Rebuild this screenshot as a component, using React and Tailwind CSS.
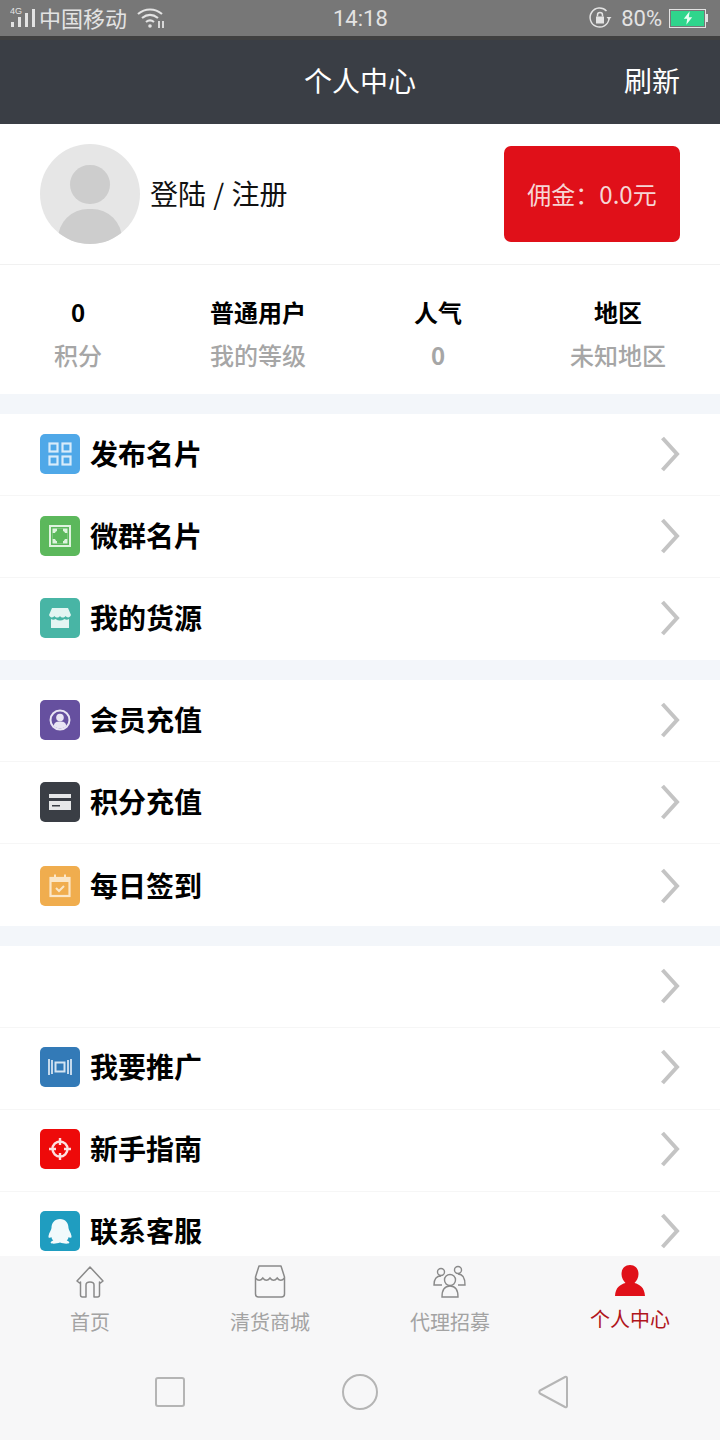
const groups = [
  [
    { key: 'card', label: '发布名片', bg: 'bg-[#4fa8e8]', pad: 'pb-[2px]' },
    { key: 'wechat', label: '微群名片', bg: 'bg-[#5cb85c]', pad: 'pb-[2px]' },
    { key: 'store', label: '我的货源', bg: 'bg-[#48b5a5]', pad: 'pb-[2px]' },
  ],
  [
    { key: 'member', label: '会员充值', bg: 'bg-[#66509f]', pad: 'pb-[2px]' },
    { key: 'credit', label: '积分充值', bg: 'bg-[#3a3e45]', pad: 'pb-[2px]' },
    { key: 'sign', label: '每日签到', bg: 'bg-[#f0ad4e]', pad: 'pt-[2px]' },
  ],
  [
    { key: 'empty', label: '', pad: 'pb-[2px]' },
    { key: 'promo', label: '我要推广', bg: 'bg-[#337ab7]', pad: 'pb-[3px]' },
    { key: 'guide', label: '新手指南', bg: 'bg-[#ee0a0a]', pad: 'pb-1' },
    { key: 'qq', label: '联系客服', bg: 'bg-[#1f9dc0]', pad: 'pb-1' },
  ],
]

const stats = [
  { top: '0', bottom: '积分' },
  { top: '普通用户', bottom: '我的等级' },
  { top: '人气', bottom: '0' },
  { top: '地区', bottom: '未知地区' },
]

function MenuGlyph({ name }) {
  const glyphs = {
    card: (
      <g fill="none" stroke="#d8ecfa" strokeWidth="2.2">
        <rect x="9.5" y="9.5" width="8" height="8" />
        <rect x="22.5" y="9.5" width="8" height="8" />
        <rect x="9.5" y="22.5" width="8" height="8" />
        <rect x="22.5" y="22.5" width="8" height="8" />
      </g>
    ),
    wechat: (
      <g>
        <rect x="10" y="10" width="20" height="20" fill="none" stroke="#dff3df" strokeWidth="2" />
        <rect x="12.5" y="12.5" width="15" height="15" fill="#dff3df" />
        <circle cx="20" cy="20" r="6" fill="#5cb85c" />
        <path d="M17 12.500h6v15h-6zM12.500 17h15v6h-15z" fill="#5cb85c" />
      </g>
    ),
    store: (
      <g fill="#e4f5f2">
        <path d="M12 10h16l3 7c-1 3-4 3-5.500 1-1.500 2-4 2-5.500 0-1.500 2-4 2-5.500 0-1.500 2-4.500 2-5.500-1z" />
        <path d="M11 21c1.500 1 3 1 4.500 0 3 2 6 2 9 0 1.500 1 3 1 4.500 0v9H11z" />
      </g>
    ),
    member: (
      <g>
        <circle cx="20" cy="20" r="9.500" fill="none" stroke="#e9e5f3" strokeWidth="2" />
        <circle cx="20" cy="17.500" r="3.800" fill="#e9e5f3" />
        <path d="M13.500 26c1-4 3.500-4.500 6.500-4.500s5.500.5 6.500 4.500c-3.500 3.300-9.500 3.300-13 0z" fill="#e9e5f3" />
      </g>
    ),
    credit: (
      <g>
        <rect x="9" y="12" width="22" height="16" fill="#e6e7e8" />
        <rect x="9" y="16" width="22" height="3" fill="#3a3e45" />
        <rect x="12" y="23" width="8" height="1.500" fill="#3a3e45" />
      </g>
    ),
    sign: (
      <g>
        <rect x="10.500" y="12" width="19" height="18" fill="none" stroke="#fbe7c8" strokeWidth="2.200" />
        <rect x="10" y="11" width="20" height="5" fill="#fbe7c8" />
        <rect x="14" y="8.500" width="2" height="4" fill="#fbe7c8" />
        <rect x="24" y="8.500" width="2" height="4" fill="#fbe7c8" />
        <path d="M16 22l3 3 5-5" fill="none" stroke="#fbe7c8" strokeWidth="2" />
      </g>
    ),
    promo: (
      <g fill="none" stroke="#d4e4f2">
        <rect x="15.500" y="15.500" width="9" height="9" strokeWidth="2" />
        <path d="M9 12v16M12 13v14M31 12v16M28 13v14" strokeWidth="1.800" />
      </g>
    ),
    guide: (
      <g fill="none" stroke="#fde0e0" strokeWidth="2.400">
        <circle cx="20" cy="20" r="7.500" />
        <path d="M20 9v7M20 24v7M9 20h7M24 20h7" />
      </g>
    ),
    qq: (
      <path
        d="M20 8c-5.500 0-8.500 4-8.500 9 0 2-2.500 4.500-3 8-.2 2 .8 2.500 2.800 1 .4 1.500 1 2.500 2 3.500-2 .7-3 1.500-2.500 2.500.8 1 6 .8 9.200-.5 3.200 1.300 8.400 1.500 9.200.5.500-1-.5-1.800-2.500-2.500 1-1 1.600-2 2-3.500 2 1.500 3 1 2.800-1-.5-3.500-3-6-3-8 0-5-3-9-8.500-9z"
        fill="#f2fafc"
      />
    ),
  }
  return (
    <svg viewBox="0 0 40 40" className="w-10 h-10">
      {glyphs[name]}
    </svg>
  )
}

function MenuRow({ item, last }) {
  return (
    <div className={`flex items-center h-[82px] shrink-0 bg-white pl-10 pr-10 ${item.pad} ${last ? '' : 'border-b border-[#f6f6f6]'}`}>
      {item.bg && (
        <div className={`w-10 h-10 rounded-[5px] mr-[10px] ${item.bg}`}>
          <MenuGlyph name={item.key} />
        </div>
      )}
      <span className="flex-1 text-[28px] font-bold text-black leading-none mb-[2px]">{item.label}</span>
      <svg viewBox="0 0 20 36" className="w-5 h-9" fill="none" stroke="#c4c4c4" strokeWidth="4">
        <path d="M2.500 2L17 18 2.500 34" />
      </svg>
    </div>
  )
}

function TabIcon({ name }) {
  if (name === 'home') {
    return (
      <svg viewBox="0 0 36 36" className="w-9 h-9" fill="none" stroke="#8a8a8a" strokeWidth="1.500">
        <path d="M5 17L18 3l13 14-2.500 2-1-1v13c0 1.500-1 2-2 2h-3.500V21c0-4-8-4-8 0v12H10.500c-1 0-2-.5-2-2V18l-1 1z" strokeLinejoin="round" />
      </svg>
    )
  }
  if (name === 'store') {
    return (
      <svg viewBox="0 0 36 36" className="w-9 h-9" fill="none" stroke="#8a8a8a" strokeWidth="1.500">
        <path d="M7 2h22l3.500 11v17c0 2-1 3-3 3h-23c-2 0-3-1-3-3V13z" strokeLinejoin="round" />
        <path d="M3.500 14c2.500 3 5 3 7.300 0 2.400 3 4.800 3 7.200 0 2.400 3 4.800 3 7.200 0 2.300 3 4.800 3 7.300 0" />
      </svg>
    )
  }
  if (name === 'team') {
    return (
      <svg viewBox="0 0 36 36" className="w-9 h-9" fill="none" stroke="#8a8a8a" strokeWidth="1.400">
        <circle cx="18" cy="16" r="5.500" />
        <circle cx="9" cy="8" r="3.500" />
        <circle cx="26" cy="6" r="3.500" />
        <path d="M10 33c0-8 3-11 8-11s8 3 8 11z" />
        <path d="M10 21H2c0-6 2-9 7-9M26 21h7c0-7-2-11-7-11" />
      </svg>
    )
  }
  return (
    <svg viewBox="0 0 36 36" className="w-9 h-9" fill="#e01019">
      <path d="M18 1c-5.500 0-8.500 4-8.500 9 0 4 2 7 4 9-5 1.500-10 4-10.500 13h30c-.500-9-5.500-11.500-10.500-13 2-2 4-5 4-9 0-5-3-9-8.500-9z" />
    </svg>
  )
}

const tabs = [
  { key: 'home', label: '首页' },
  { key: 'store', label: '清货商城' },
  { key: 'team', label: '代理招募' },
  { key: 'me', label: '个人中心', active: true },
]

export default function App() {
  return (
    <div className="w-[720px] h-[1440px] overflow-hidden flex flex-col bg-white font-['Noto_Sans_CJK_SC','Noto_Sans',sans-serif]">
      {/* Status bar */}
      <div className="h-9 shrink-0 bg-[#777777] text-[#e3e3e3] text-[22px] flex items-center justify-between pl-[10px] pr-3 relative">
        <div className="flex items-center">
          <svg viewBox="0 0 30 24" className="w-[30px] h-6" fill="#e3e3e3">
            <text x="0" y="8" fontSize="9" fontFamily="Liberation Sans, sans-serif">4G</text>
            <rect x="1" y="16" width="3" height="5" />
            <rect x="8" y="11" width="3" height="10" />
            <rect x="15" y="7" width="3" height="14" />
            <rect x="22" y="3" width="3" height="18" />
          </svg>
          <span className="ml-[-1px] leading-none mb-[2px]">中国移动</span>
          <svg viewBox="0 0 30 24" className="w-[30px] h-6 ml-[9px]" fill="none" stroke="#e3e3e3" strokeWidth="2.200">
            <path d="M2 8c7-6 17-6 24 0M6 12c5-4 11-4 16 0M10 16c2.500-2 5.500-2 8 0" />
            <circle cx="14" cy="20" r="1.800" fill="#e3e3e3" stroke="none" />
            <path d="M23 15v7M27 15v7" strokeWidth="1.800" />
          </svg>
        </div>
        <span className="absolute left-[333px] top-[8px] font-['Roboto',sans-serif] text-[22px] leading-none">14:18</span>
        <div className="flex items-center font-['Roboto',sans-serif]">
          <svg viewBox="0 0 24 24" className="w-6 h-6" fill="none" stroke="#e3e3e3" strokeWidth="1.500">
            <path d="M21 13a9.500 9.500 0 1 1-2.500-8" />
            <path d="M23.500 11l-2.500 3-2.500-3z" fill="#e3e3e3" stroke="none" />
            <rect x="8" y="10.500" width="8" height="7" fill="#e3e3e3" stroke="none" />
            <path d="M9.500 10.500V9a2.500 2.500 0 0 1 5 0v1.500" />
          </svg>
          <span className="ml-[9px] leading-none mt-px">80%</span>
          <div className="ml-[7px] w-[37px] h-[19px] border border-[#e3e3e3] p-px flex items-center justify-center">
            <div className="w-[33px] h-[15px] bg-[#2fd58c] flex items-center justify-center">
              <svg viewBox="0 0 12 16" className="w-[10px] h-[14px]" fill="#e8fff4">
                <path d="M8 0L1 9h4l-1 7 7-9H7z" />
              </svg>
            </div>
          </div>
          <div className="w-[2px] h-2 bg-[#e3e3e3]" />
        </div>
      </div>

      {/* Header */}
      <div className="h-[88px] shrink-0 bg-[#3a3e45] flex items-center justify-center relative border-t-4 border-[#404040] pb-1">
        <span className="text-[28px] text-white leading-none">个人中心</span>
        <span className="absolute right-10 text-[28px] text-white leading-none">刷新</span>
      </div>

      {/* Profile */}
      <div className="h-[141px] shrink-0 flex items-center justify-between pl-10 pr-10 pb-px border-b border-[#f1f1f1]">
        <div className="flex items-center">
          <div className="w-[100px] h-[100px] rounded-full bg-[#e6e6e6] overflow-hidden flex flex-col items-center">
            <div className="w-10 h-[39px] rounded-full bg-[#cdcdcd] mt-[21px] shrink-0" />
            <div className="w-[64px] h-[60px] rounded-full bg-[#cdcdcd] mt-[5px] shrink-0" />
          </div>
          <span className="ml-[10px] text-[28px] text-[#111] leading-none whitespace-pre mb-px [word-spacing:1px]">登陆 / 注册</span>
        </div>
        <div className="w-[176px] h-[96px] rounded-[7px] bg-[#e01019] text-[#f6d5d5] text-[24px] flex items-center justify-center">
          佣金：0.0元
        </div>
      </div>

      {/* Stats */}
      <div className="h-[129px] shrink-0 w-[720px] -ml-3 grid grid-cols-4 items-center text-center pt-[7px]">
        {stats.map(stat => (
          <div key={stat.bottom + stat.top} className="flex flex-col gap-[11px]">
            <span className="text-[24px] font-bold text-black leading-[32px]">{stat.top}</span>
            <span className={`text-[24px] text-[#a6a6a6] leading-[32px] ${stat.bottom === '0' ? 'font-bold' : 'font-medium'}`}>{stat.bottom}</span>
          </div>
        ))}
      </div>

      {/* Menu */}
      <div className="flex-1 min-h-0 overflow-hidden flex flex-col">
        {groups.map((group, i) => (
          <div key={i} className="shrink-0">
            <div className="h-5 bg-[#f3f6fa]" />
            {group.map((item, j) => (
              <MenuRow key={item.key} item={item} last={j === group.length - 1} />
            ))}
          </div>
        ))}
      </div>

      {/* Tab bar + system nav */}
      <div className="h-[184px] shrink-0 bg-[#f7f7f8]">
        <div className="grid grid-cols-4 pt-[8px]">
          {tabs.map(tab => (
            <div key={tab.key} className="flex flex-col items-center">
              <TabIcon name={tab.key} />
              <span className={`text-[20px] leading-none ${tab.active ? 'text-[#b0151c] mt-[9px]' : 'text-[#a3a3a3] mt-3'}`}>
                {tab.label}
              </span>
            </div>
          ))}
        </div>
        <div className="grid grid-cols-[170px_190px_216px] items-center mt-[42px] justify-items-center pl-[85px]">
          <div className="w-[30px] h-[30px] rounded-[3px] border-2 border-[#b5b5b5]" />
          <div className="w-9 h-9 rounded-full border-2 border-[#b5b5b5] ml-[20px]" />
          <svg viewBox="0 0 32 36" className="w-8 h-9" fill="none" stroke="#b5b5b5" strokeWidth="2">
            <path d="M28 3c1-.500 2 0 2 1v28c0 1-1 1.500-2 1L3 19.500c-1-.800-1-2 0-3z" strokeLinejoin="round" />
          </svg>
        </div>
      </div>
    </div>
  )
}
